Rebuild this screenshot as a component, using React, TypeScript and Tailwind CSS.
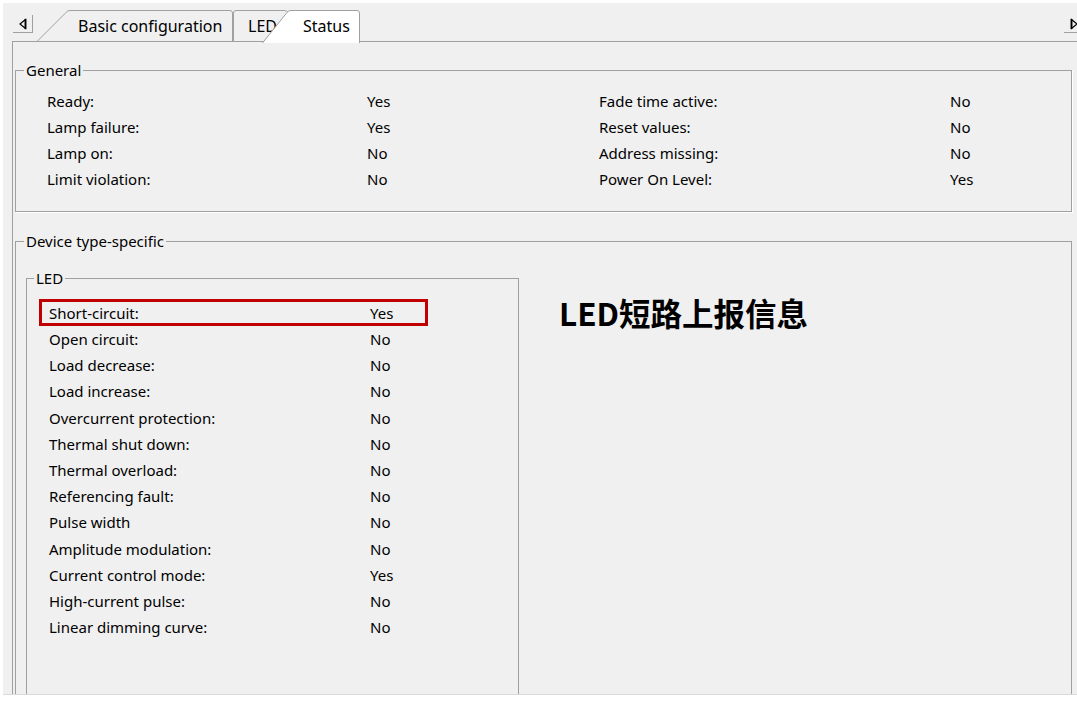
const general = [
  [
    { label: "Ready:", value: "Yes" },
    { label: "Fade time active:", value: "No" },
  ],
  [
    { label: "Lamp failure:", value: "Yes" },
    { label: "Reset values:", value: "No" },
  ],
  [
    { label: "Lamp on:", value: "No" },
    { label: "Address missing:", value: "No" },
  ],
  [
    { label: "Limit violation:", value: "No" },
    { label: "Power On Level:", value: "Yes" },
  ],
];

const ledRows = [
  { label: "Short-circuit:", value: "Yes" },
  { label: "Open circuit:", value: "No" },
  { label: "Load decrease:", value: "No" },
  { label: "Load increase:", value: "No" },
  { label: "Overcurrent protection:", value: "No" },
  { label: "Thermal shut down:", value: "No" },
  { label: "Thermal overload:", value: "No" },
  { label: "Referencing fault:", value: "No" },
  { label: "Pulse width", value: "No" },
  { label: "Amplitude modulation:", value: "No" },
  { label: "Current control mode:", value: "Yes" },
  { label: "High-current pulse:", value: "No" },
  { label: "Linear dimming curve:", value: "No" },
];

function ScrollButton({ dir }: { dir: "left" | "right" }) {
  return (
    <div className="flex h-[18px] w-[20px] items-center justify-center border-b border-r border-[#a0a0a0] bg-[#f0f0f0]">
      <svg width="10" height="12" viewBox="0 0 10 12">
        {dir === "left" ? (
          <>
            <path d="M7.5 1.5 L2 6 L7.5 10.5 Z" fill="none" stroke="#000" strokeWidth="1.2" strokeLinejoin="miter" />
            <path d="M7.5 1 V11" stroke="#000" strokeWidth="1.8" />
          </>
        ) : (
          <>
            <path d="M2.5 1.5 L8 6 L2.5 10.5 Z" fill="none" stroke="#000" strokeWidth="1.2" strokeLinejoin="miter" />
            <path d="M2.5 1 V11" stroke="#000" strokeWidth="1.8" />
          </>
        )}
      </svg>
    </div>
  );
}

export default function App() {
  return (
    <div
      className="h-[701px] w-[1077px] overflow-hidden bg-white pl-[3px] pt-[3px] text-[15px] text-black"
      style={{ fontFamily: '"Noto Sans", "Noto Sans CJK SC", sans-serif' }}
    >
      <div className="flex h-[692px] flex-col overflow-hidden border-b border-[#dadada] bg-[#f0f0f0]">
        {/* tab strip */}
        <div className="flex h-[38px] shrink-0 items-end text-[16px]">
          <div className="mb-[8px] ml-[10px]">
            <ScrollButton dir="left" />
          </div>

          <div className="relative ml-[4px] flex h-[31px] w-[196px] items-center pl-[41px]">
            <svg className="absolute inset-0" width="196" height="31" viewBox="0 0 196 31">
              <path d="M0.5 31 L29 2.5 Q30.5 0.5 33 0.5 H193 Q195.5 0.5 195.5 3 V31" fill="#f0f0f0" stroke="#a0a0a0" />
            </svg>
            <span className="relative pt-[1px] leading-none">Basic configuration</span>
          </div>

          <div className="relative flex h-[31px] w-[57px] items-center pl-[15px]">
            <svg className="absolute inset-0" width="57" height="31" viewBox="0 0 57 31">
              <path d="M0.5 31 V3 Q0.5 0.5 3 0.5 H51 Q54 0.5 56 3 V31" fill="#f0f0f0" stroke="#a0a0a0" />
            </svg>
            <span className="relative pt-[1px] leading-none">LED</span>
          </div>

          <div className="relative z-10 mb-[-2px] ml-[-28px] flex h-[33px] w-[98px] items-center pb-[2px] pl-[41px]">
            <svg className="absolute inset-0" width="98" height="33" viewBox="0 0 98 33">
              <path d="M0.5 33 L25 2.5 Q26.5 0.5 29 0.5 H95 Q97.5 0.5 97.5 3 V33" fill="#ffffff" stroke="#a0a0a0" />
            </svg>
            <span className="relative pt-[1px] leading-none">Status</span>
          </div>

          <div className="mb-[8px] ml-auto mr-[-7px]">
            <ScrollButton dir="right" />
          </div>
        </div>

        {/* panel */}
        <div className="ml-[9px] flex-1 overflow-hidden border-l border-t border-[#a0a0a0] pl-[2px] pt-[18px]">
          <fieldset className="w-[1057px] border border-[#a0a0a0] pb-[19px] shadow-[1px_1px_0_#ffffff]">
            <legend className="ml-[8px] px-[2px] leading-[20px]">General</legend>
            <div className="pl-[31px] pt-[8px]">
              {general.map((row, i) => (
                <div key={i} className="grid h-[26px] grid-cols-[320px_232px_351px_1fr] items-center">
                  <span>{row[0].label}</span>
                  <span>{row[0].value}</span>
                  <span>{row[1].label}</span>
                  <span>{row[1].value}</span>
                </div>
              ))}
            </div>
          </fieldset>

          <fieldset className="mt-[19px] h-[480px] w-[1057px] border border-[#a0a0a0]">
            <legend className="ml-[8px] px-[2px] leading-[20px]">Device type-specific</legend>
            <div className="flex items-start pt-[17px]">
              <fieldset className="ml-[10px] h-[460px] w-[493px] border border-[#a0a0a0]">
                <legend className="ml-[7px] px-[2px] leading-[20px]">LED</legend>
                <div className="pl-[22px] pt-[12px]">
                  {ledRows.map((row, i) => (
                    <div key={row.label} className="relative grid h-[26.2px] grid-cols-[321px_1fr] items-center">
                      {i === 0 && (
                        <div className="absolute left-[-10px] top-[-1px] h-[27px] w-[389px] border-[3px] border-[#c00000]" />
                      )}
                      <span className="relative">{row.label}</span>
                      <span className="relative">{row.value}</span>
                    </div>
                  ))}
                </div>
              </fieldset>
              <div
                className="ml-[40px] mt-[25px] text-[31.5px] font-bold leading-[38px] text-black"
                style={{ fontFamily: '"Noto Sans CJK SC", "Noto Sans", sans-serif' }}
              >
                LED短路上报信息
              </div>
            </div>
          </fieldset>
        </div>
      </div>
    </div>
  );
}
